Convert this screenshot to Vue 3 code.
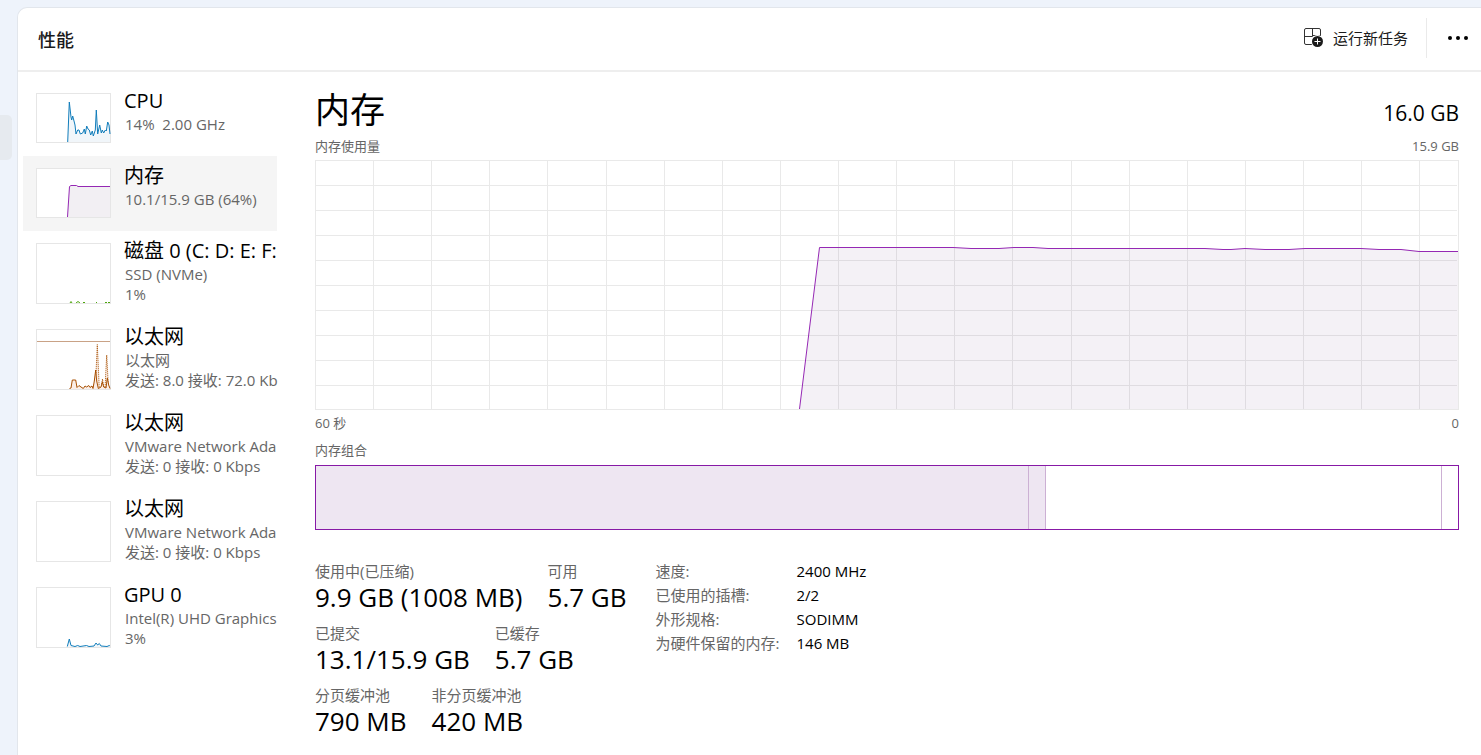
<script setup>
const devices = [
  {
    name: 'CPU', lines: ['14%  2.00 GHz'], color: '#117dbb', fill: '#f1f6fa', h: 50,
    series: [{ pts: '31.7,49 33.3,9 35,24 35.7,27 36.7,23 38,28 39,32 40,41 41.7,37 43,37 44.3,41 46.7,40 48.3,36 49.3,41 50.7,33 52,36 53.3,37 54.7,42 56.3,38 57.3,43 59.3,37 60.3,17 61.7,41 63.7,32 65.3,40 66.3,37 67.7,40 69.3,37 70.3,38 71.7,29 73,32 74,41' }]
  },
  {
    name: '内存', lines: ['10.1/15.9 GB (64%)'], color: '#9528b4', fill: '#f2eff3', h: 50, active: true,
    series: [{ pts: '31.5,49 33.5,18.5 35,17.5 40.5,17.5 42,18.5 74,18.5' }]
  },
  {
    name: '磁盘 0 (C: D: E: F:', lines: ['SSD (NVMe)', '1%'], color: '#4da60c', fill: 'none', h: 61,
    series: [
      { pts: '34,60 35,58.5 36,60' }, { pts: '40,60 42,58.5 44,60' }, { pts: '47,59.5 49,59.5' },
      { pts: '60,59.5 61,59.5' }, { pts: '69,59.5 71,59.5' }, { pts: '72,59.5 74,59.5' }
    ]
  },
  {
    name: '以太网', lines: ['以太网', '发送: 8.0 接收: 72.0 Kb'], color: '#a74f01', fill: '#fbeee7', h: 61, limit: true,
    series: [
      { pts: '57.5,60 60,44 61.3,15.5 63.3,60 65,60 66.5,50 68,60 69,60 70.7,26 72.5,60', dotted: true },
      { pts: '33.5,59.5 35,59 36.3,51 39.7,51 41,58.5 43,56.5 45,58 47.3,59.5 49,57 50.7,58 52.7,56.5 54,58.5 56,57 57,59.5 58.3,52 59.7,41 60.7,52 62.3,59.5 65,58 66.3,53 67.7,58 70,59 71.3,49 72.7,56 74,59.5' }
    ]
  },
  { name: '以太网', lines: ['VMware Network Ada', '发送: 0 接收: 0 Kbps'], h: 61, series: [] },
  { name: '以太网', lines: ['VMware Network Ada', '发送: 0 接收: 0 Kbps'], h: 61, series: [] },
  {
    name: 'GPU 0', lines: ['Intel(R) UHD Graphics', '3%'], color: '#117dbb', fill: '#f1f6fa', h: 61,
    series: [{ pts: '31.3,59.5 33.3,52 35,58.5 39,59.5 41.7,58.5 44,59.5 50.5,58.5 53,59.5 58,59 60,56 61.7,58 63.3,56.5 65,59 71,59.5 73.3,58.5 74,59' }]
  }
]

const area = (pts) => {
  const all = pts.split(' ')
  return `${all[0].split(',')[0]},60 ${pts} ${all[all.length - 1].split(',')[0]},60`
}

const columns = Array.from({ length: 19 }, (_, i) => Math.round((i + 1) * 58.12) + 0.5)
const rows = Array.from({ length: 9 }, (_, i) => (i + 1) * 25 + 0.5)
const usage = '484.5,249 504.5,87.5 638,87.5 656,88.5 684,88.5 699,87.5 718,87.5 733,88.5 890,88.5 908,89.5 916,89.5 930,88.5 950,89.5 974,89.5 990,88.5 1046,88.5 1064,89.5 1086,89.5 1104,91.5 1143,91.5'

const stats = [
  [['使用中(已压缩)', '9.9 GB (1008 MB)'], ['可用', '5.7 GB']],
  [['已提交', '13.1/15.9 GB'], ['已缓存', '5.7 GB']],
  [['分页缓冲池', '790 MB'], ['非分页缓冲池', '420 MB']]
]
const specs = [['速度:', '2400 MHz'], ['已使用的插槽:', '2/2'], ['外形规格:', 'SODIMM'], ['为硬件保留的内存:', '146 MB']]
</script>

<template>
  <div class="window">
    <div class="rail"><div class="rail-item"></div></div>
    <div class="panel">
      <header class="header">
        <h1>性能</h1>
        <button class="run" type="button">
          <svg width="20" height="20" viewBox="0 0 20 20" aria-hidden="true">
            <path d="M8 16.5H2a1.5 1.5 0 0 1-1.5-1.5V2A1.5 1.5 0 0 1 2 .5h13A1.5 1.5 0 0 1 16.5 2V8M.5 8.5H8.5V.5M8.5 7.5H16.5" fill="none" stroke="#333" />
            <circle cx="13.5" cy="13.5" r="6.5" fill="#fff" />
            <circle cx="13.5" cy="13.5" r="5.5" fill="#1b1b1b" />
            <path d="M13.5 10.5v6M10.5 13.5h6" stroke="#fff" />
          </svg>
          <span>运行新任务</span>
        </button>
        <button class="more" type="button" aria-label="更多">
          <svg width="22" height="6" viewBox="0 0 22 6" aria-hidden="true">
            <circle cx="3" cy="3" r="2" /><circle cx="11" cy="3" r="2" /><circle cx="19" cy="3" r="2" />
          </svg>
        </button>
      </header>
      <div class="content">
        <nav class="devices">
          <button v-for="(d, i) in devices" :key="i" type="button" class="device" :class="{ active: d.active }">
            <svg class="thumb" width="75" :height="d.h" :viewBox="`0 0 75 ${d.h}`" aria-hidden="true">
              <rect x=".5" y=".5" width="74" :height="d.h - 1" fill="#fff" stroke="#e6e6e6" />
              <path v-if="d.limit" d="M1 12.5H74" stroke="#c9a286" />
              <template v-for="(s, k) in d.series" :key="k">
                <polygon :points="area(s.pts)" :fill="d.fill" />
                <polyline :points="s.pts" fill="none" :stroke="d.color" :stroke-dasharray="s.dotted ? '1 1' : null" />
              </template>
              <path :d="`M0 ${d.h - 0.5}H75`" stroke="#e6e6e6" />
            </svg>
            <span class="info">
              <span class="name">{{ d.name }}</span>
              <span v-for="(l, k) in d.lines" :key="k" class="line">{{ l }}</span>
            </span>
          </button>
        </nav>
        <main class="detail">
          <div class="title">
            <h2>内存</h2>
            <span class="capacity">16.0 GB</span>
          </div>
          <div class="caption top"><span>内存使用量</span><span>15.9 GB</span></div>
          <svg class="graph" viewBox="0 0 1144 250" preserveAspectRatio="none" aria-hidden="true">
            <g stroke="#e9e9e9" fill="none">
              <path v-for="x in columns" :key="'c' + x" :d="`M${x} 0V250`" />
              <path v-for="y in rows" :key="'r' + y" :d="`M0 ${y}H1142`" />
              <rect x=".5" y=".5" width="1143" height="249" />
            </g>
            <polygon :points="`${usage} 1143,249`" fill="#4b1464" fill-opacity=".06" />
            <polyline :points="usage" fill="none" stroke="#9528b4" />
          </svg>
          <div class="caption axis"><span>60 秒</span><span>0</span></div>
          <div class="caption"><span>内存组合</span></div>
          <div class="composition">
            <div class="used"></div>
            <div class="used"></div>
            <div></div>
            <div></div>
          </div>
          <div class="figures">
            <div class="stats">
              <dl v-for="(r, i) in stats" :key="i">
                <div v-for="s in r" :key="s[0]">
                  <dt>{{ s[0] }}</dt>
                  <dd>{{ s[1] }}</dd>
                </div>
              </dl>
            </div>
            <table class="specs">
              <tbody>
                <tr v-for="s in specs" :key="s[0]">
                  <th scope="row">{{ s[0] }}</th>
                  <td>{{ s[1] }}</td>
                </tr>
              </tbody>
            </table>
          </div>
        </main>
      </div>
    </div>
  </div>
</template>

<style>
body {
  margin: 0;
}
</style>

<style scoped>
* {
  box-sizing: border-box;
}
.window {
  display: flex;
  min-height: 100vh;
  padding-top: 7px;
  background: #eef3fb;
  color: #000;
  font-family: "Open Sans", "Noto Sans CJK SC", sans-serif;
  font-size: 15px;
  line-height: 20px;
}
h1, h2, dl, dd {
  margin: 0;
  font-weight: 400;
}
button {
  padding: 0;
  border: 0;
  background: none;
  color: inherit;
  font: inherit;
  text-align: left;
}
.rail {
  width: 17px;
  flex: none;
  padding-top: 108px;
}
.rail-item {
  width: 12px;
  height: 45px;
  border-radius: 0 5px 5px 0;
  background: #e6eaef;
}
.panel {
  flex: 1;
  min-width: 0;
  border: solid #e2e6ec;
  border-width: 1px 0 0 1px;
  border-radius: 10px 0 0 0;
  background: #fff;
}
.header {
  display: flex;
  align-items: center;
  height: 64px;
  padding: 0 1px 2px 20px;
  border-bottom: 2px solid #eee;
  color: #1b1b1b;
}
.header h1 {
  flex: 1;
  font-size: 18px;
  font-weight: 500;
  line-height: 26px;
  padding-top: 4px;
}
.run {
  display: flex;
  align-items: center;
  gap: 9px;
  height: 40px;
  padding-right: 18px;
  border-right: 1px solid #eaeaea;
}
.more {
  display: flex;
  justify-content: center;
  align-items: center;
  width: 53px;
  height: 40px;
  padding-left: 8px;
}
.content {
  display: flex;
  padding-top: 9px;
}
.devices {
  flex: none;
  width: 264px;
  padding-left: 5px;
}
.device {
  display: flex;
  gap: 13px;
  width: 254px;
  padding: 6px 0 13px 13px;
}
.device.active {
  background: #f5f5f5;
}
.thumb {
  flex: none;
  margin-top: 6px;
}
.info {
  flex: none;
  width: 158px;
  margin-bottom: -8px;
  overflow: hidden;
  white-space: pre;
}
.name, .line {
  display: block;
}
.name {
  font-size: 20px;
  line-height: 27px;
}
.line {
  padding-left: 1px;
  color: #666;
}
.detail {
  flex: 1;
  min-width: 0;
  padding: 2px 22px 16px 33px;
}
.title {
  display: flex;
  justify-content: space-between;
  height: 54px;
}
.title h2 {
  font-size: 35px;
  line-height: 54px;
}
.capacity {
  font-size: 21px;
  line-height: 60px;
}
.caption {
  display: flex;
  justify-content: space-between;
  color: #666;
  font-size: 13px;
  line-height: 18px;
}
.caption.top {
  padding-bottom: 5px;
}
.caption.axis {
  padding: 4px 0 9px;
}
.graph {
  display: block;
  width: 100%;
  height: 250px;
}
.composition {
  display: grid;
  grid-template-columns: 713fr 17fr 396fr 17fr;
  height: 65px;
  margin-top: 6px;
  border: 1px solid #8719a6;
}
.composition > div + div {
  border-left: 1px solid #ccb0d4;
}
.composition .used {
  background: #eee6f2;
}
.figures {
  display: flex;
  gap: 29px;
  padding-top: 31px;
}
.stats dl {
  display: flex;
  gap: 25px;
  height: 62px;
}
.stats dt {
  color: #666;
}
.stats dd {
  font-size: 26px;
  line-height: 32px;
  white-space: nowrap;
}
.specs {
  align-self: flex-start;
  border-collapse: collapse;
}
.specs th, .specs td {
  padding: 0 0 4px;
  font-weight: 400;
  text-align: left;
}
.specs th {
  padding-right: 17px;
  color: #666;
}
</style>
